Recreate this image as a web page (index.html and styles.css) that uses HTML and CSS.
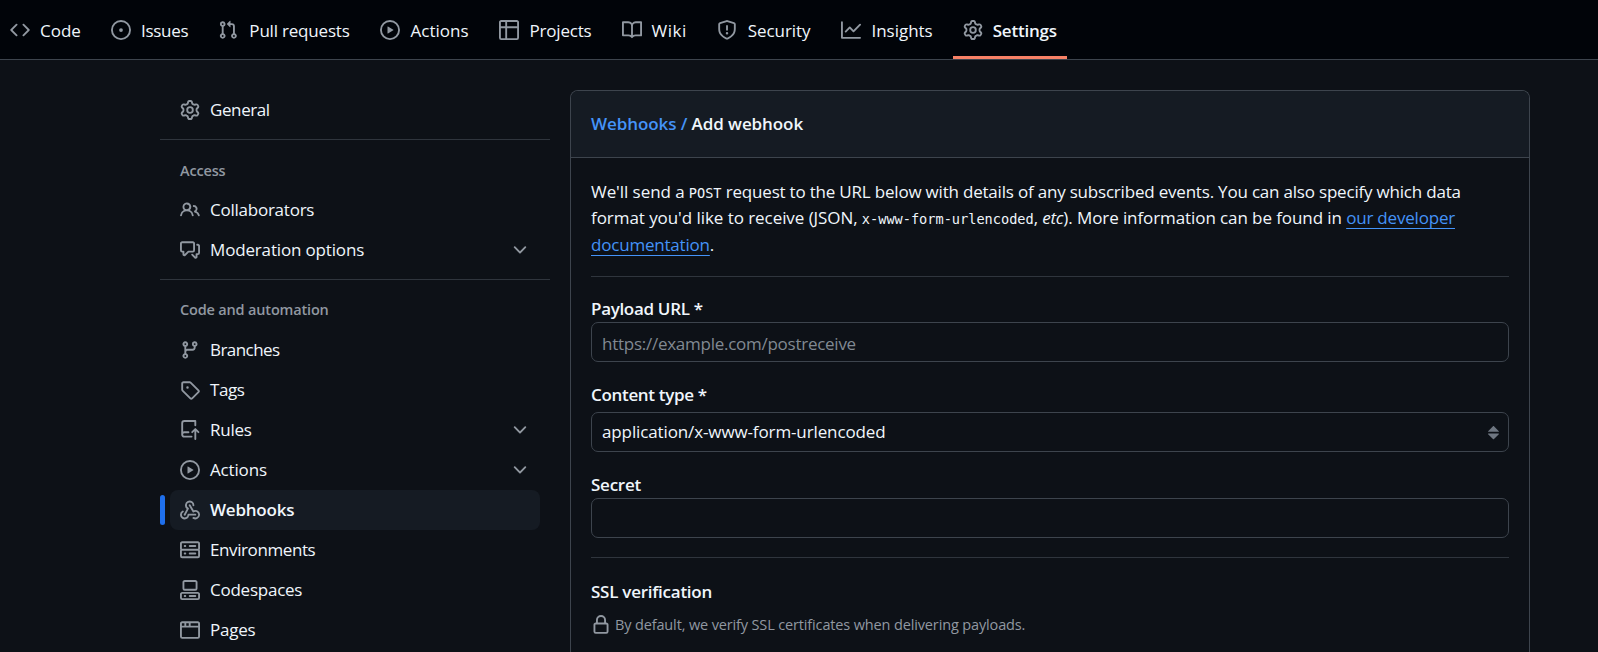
FILE: index.html
```html
<!DOCTYPE html>
<html lang="en">
<head>
<meta charset="utf-8">
<title>Add webhook</title>
<link rel="stylesheet" href="styles.css">
</head>
<body>
<svg class="sprite" aria-hidden="true">
  <symbol id="code" viewBox="0 0 16 16"><path d="m11.28 3.22 4.25 4.25a.75.75 0 0 1 0 1.06l-4.25 4.25a.749.749 0 0 1-1.275-.326.749.749 0 0 1 .215-.734L13.94 8l-3.72-3.72a.749.749 0 0 1 .326-1.275.749.749 0 0 1 .734.215Zm-6.56 0a.751.751 0 0 1 1.042.018.751.751 0 0 1 .018 1.042L2.06 8l3.72 3.72a.749.749 0 0 1-.326 1.275.749.749 0 0 1-.734-.215L.47 8.53a.75.75 0 0 1 0-1.06Z"/></symbol>
  <symbol id="issue" viewBox="0 0 16 16"><path d="M8 9.5a1.5 1.5 0 1 0 0-3 1.5 1.5 0 0 0 0 3Z"/><path d="M8 0a8 8 0 1 1 0 16A8 8 0 0 1 8 0ZM1.5 8a6.5 6.5 0 1 0 13 0 6.5 6.5 0 0 0-13 0Z"/></symbol>
  <symbol id="pull" viewBox="0 0 16 16"><path d="M1.5 3.25a2.25 2.25 0 1 1 3 2.122v5.256a2.251 2.251 0 1 1-1.5 0V5.372A2.25 2.25 0 0 1 1.5 3.25Zm5.677-.177L9.573.677A.25.25 0 0 1 10 .854V2.5h1A2.5 2.5 0 0 1 13.5 5v5.628a2.251 2.251 0 1 1-1.5 0V5a1 1 0 0 0-1-1h-1v1.646a.25.25 0 0 1-.427.177L7.177 3.427a.25.25 0 0 1 0-.354ZM3.75 2.5a.75.75 0 1 0 0 1.5.75.75 0 0 0 0-1.5Zm0 9.5a.75.75 0 1 0 0 1.5.75.75 0 0 0 0-1.5Zm8.25.75a.75.75 0 1 0 1.5 0 .75.75 0 0 0-1.5 0Z"/></symbol>
  <symbol id="play" viewBox="0 0 16 16"><path d="M8 0a8 8 0 1 1 0 16A8 8 0 0 1 8 0ZM1.5 8a6.5 6.5 0 1 0 13 0 6.5 6.5 0 0 0-13 0Zm4.879-2.773 4.264 2.559a.25.25 0 0 1 0 .428l-4.264 2.559A.25.25 0 0 1 6 10.559V5.442a.25.25 0 0 1 .379-.215Z"/></symbol>
  <symbol id="table" viewBox="0 0 16 16"><path d="M0 1.75C0 .784.784 0 1.75 0h12.5C15.216 0 16 .784 16 1.75v12.5A1.75 1.75 0 0 1 14.25 16H1.75A1.75 1.75 0 0 1 0 14.25ZM6.5 6.5v8h7.75a.25.25 0 0 0 .25-.25V6.5Zm8-1.5V1.75a.25.25 0 0 0-.25-.25H6.5V5Zm-13 1.5v7.75c0 .138.112.25.25.25H5v-8ZM5 5V1.5H1.75a.25.25 0 0 0-.25.25V5Z"/></symbol>
  <symbol id="book" viewBox="0 0 16 16"><path d="M0 1.75A.75.75 0 0 1 .75 1h4.253c1.227 0 2.317.59 3 1.501A3.743 3.743 0 0 1 11.006 1h4.245a.75.75 0 0 1 .75.75v10.5a.75.75 0 0 1-.75.75h-4.507a2.25 2.25 0 0 0-1.591.659l-.622.621a.75.75 0 0 1-1.06 0l-.622-.621A2.25 2.25 0 0 0 5.258 13H.75a.75.75 0 0 1-.75-.75Zm7.251 10.324.004-5.073-.002-2.253A2.25 2.25 0 0 0 5.003 2.5H1.5v9h3.757a3.75 3.75 0 0 1 1.994.574ZM8.755 4.75l-.004 7.322a3.752 3.752 0 0 1 1.992-.572H14.5v-9h-3.495a2.25 2.25 0 0 0-2.25 2.25Z"/></symbol>
  <symbol id="shield" viewBox="0 0 16 16"><path d="M7.467.133a1.748 1.748 0 0 1 1.066 0l5.25 1.68A1.75 1.75 0 0 1 15 3.48V7c0 1.566-.32 3.182-1.303 4.682-.983 1.498-2.585 2.813-5.032 3.855a1.697 1.697 0 0 1-1.33 0c-2.447-1.042-4.049-2.357-5.032-3.855C1.32 10.182 1 8.566 1 7V3.48a1.75 1.75 0 0 1 1.217-1.667Zm.61 1.429a.25.25 0 0 0-.153 0l-5.25 1.68a.25.25 0 0 0-.174.238V7c0 1.358.275 2.666 1.057 3.86.784 1.194 2.121 2.34 4.366 3.297a.196.196 0 0 0 .154 0c2.245-.956 3.582-2.104 4.366-3.298C13.225 9.666 13.5 8.36 13.5 7V3.48a.251.251 0 0 0-.174-.237l-5.25-1.68ZM8.75 4.75v3a.75.75 0 0 1-1.5 0v-3a.75.75 0 0 1 1.5 0ZM9 10.5a1 1 0 1 1-2 0 1 1 0 0 1 2 0Z"/></symbol>
  <symbol id="graph" viewBox="0 0 16 16"><path d="M1.5 1.75V13.5h13.75a.75.75 0 0 1 0 1.5H.75a.75.75 0 0 1-.75-.75V1.75a.75.75 0 0 1 1.5 0Zm14.28 2.53-5.25 5.25a.75.75 0 0 1-1.06 0L7 7.06 4.28 9.78a.751.751 0 0 1-1.042-.018.751.751 0 0 1-.018-1.042l3.25-3.25a.75.75 0 0 1 1.06 0L10 7.94l4.72-4.72a.751.751 0 0 1 1.042.018.751.751 0 0 1 .018 1.042Z"/></symbol>
  <symbol id="gear" viewBox="0 0 16 16"><path d="M8 0a8.2 8.2 0 0 1 .701.031C9.444.095 9.99.645 10.16 1.29l.288 1.107c.018.066.079.158.212.224.231.114.454.243.668.386.123.082.233.09.299.071l1.103-.303c.644-.176 1.392.021 1.82.63.27.385.506.792.704 1.218.315.675.111 1.422-.364 1.891l-.814.806c-.049.048-.098.147-.088.294.016.257.016.515 0 .772-.01.147.038.246.088.294l.814.806c.475.469.679 1.216.364 1.891a7.977 7.977 0 0 1-.704 1.217c-.428.61-1.176.807-1.82.63l-1.102-.302c-.067-.019-.177-.011-.3.071a5.909 5.909 0 0 1-.668.386c-.133.066-.194.158-.211.224l-.29 1.106c-.168.646-.715 1.196-1.458 1.26a8.006 8.006 0 0 1-1.402 0c-.743-.064-1.289-.614-1.458-1.26l-.289-1.106c-.018-.066-.079-.158-.212-.224a5.738 5.738 0 0 1-.668-.386c-.123-.082-.233-.09-.299-.071l-1.103.303c-.644.176-1.392-.021-1.82-.63a8.12 8.12 0 0 1-.704-1.218c-.315-.675-.111-1.422.363-1.891l.815-.806c.05-.048.098-.147.088-.294a6.214 6.214 0 0 1 0-.772c.01-.147-.038-.246-.088-.294l-.815-.806C.635 6.045.431 5.298.746 4.623a7.92 7.92 0 0 1 .704-1.217c.428-.61 1.176-.807 1.82-.63l1.102.302c.067.019.177.011.3-.071.214-.143.437-.272.668-.386.133-.066.194-.158.211-.224l.29-1.106C6.009.645 6.556.095 7.299.03 7.53.01 7.764 0 8 0Zm-.571 1.525c-.036.003-.108.036-.137.146l-.289 1.105c-.147.561-.549.967-.998 1.189-.173.086-.34.183-.5.29-.417.278-.97.423-1.529.27l-1.103-.303c-.109-.03-.175.016-.195.045-.22.312-.412.644-.573.99-.014.031-.021.11.059.19l.815.806c.411.406.562.957.53 1.456a4.709 4.709 0 0 0 0 .582c.032.499-.119 1.05-.53 1.456l-.815.806c-.081.08-.073.159-.059.19.162.346.353.677.573.989.02.03.085.076.195.046l1.102-.303c.56-.153 1.113-.008 1.53.27.161.107.328.204.501.29.447.222.85.629.997 1.189l.289 1.105c.029.109.101.143.137.146a6.6 6.6 0 0 0 1.142 0c.036-.003.108-.036.137-.146l.289-1.105c.147-.561.549-.967.998-1.189.173-.086.34-.183.5-.29.417-.278.97-.423 1.529-.27l1.103.303c.109.029.175-.016.195-.045.22-.313.411-.644.573-.99.014-.031.021-.11-.059-.19l-.815-.806c-.411-.406-.562-.957-.53-1.456a4.709 4.709 0 0 0 0-.582c-.032-.499.119-1.05.53-1.456l.815-.806c.081-.08.073-.159.059-.19a6.464 6.464 0 0 0-.573-.989c-.02-.03-.085-.076-.195-.046l-1.102.303c-.56.153-1.113.008-1.53-.27a4.44 4.44 0 0 0-.501-.29c-.447-.222-.85-.629-.997-1.189l-.289-1.105c-.029-.11-.101-.143-.137-.146a6.6 6.6 0 0 0-1.142 0ZM11 8a3 3 0 1 1-6 0 3 3 0 0 1 6 0ZM9.5 8a1.5 1.5 0 1 0-3.001.001A1.5 1.5 0 0 0 9.5 8Z"/></symbol>
  <symbol id="people" viewBox="0 0 16 16"><path d="M2 5.5a3.5 3.5 0 1 1 5.898 2.549 5.508 5.508 0 0 1 3.034 4.084.75.75 0 1 1-1.482.235 4 4 0 0 0-7.9 0 .75.75 0 0 1-1.482-.236A5.507 5.507 0 0 1 3.102 8.05 3.493 3.493 0 0 1 2 5.5ZM11 4a3.001 3.001 0 0 1 2.22 5.018 5.01 5.01 0 0 1 2.56 3.012.749.749 0 0 1-.885.954.752.752 0 0 1-.549-.514 3.507 3.507 0 0 0-2.522-2.372.75.75 0 0 1-.574-.73v-.352a.75.75 0 0 1 .416-.672A1.5 1.5 0 0 0 11 5.5.75.75 0 0 1 11 4Zm-5.5-.5a2 2 0 1 0-.001 3.999A2 2 0 0 0 5.5 3.5Z"/></symbol>
  <symbol id="discussion" viewBox="0 0 16 16"><path d="M1.75 1h8.5c.966 0 1.75.784 1.75 1.75v5.5A1.75 1.75 0 0 1 10.25 10H7.061l-2.574 2.573A1.458 1.458 0 0 1 2 11.543V10h-.25A1.75 1.75 0 0 1 0 8.25v-5.5C0 1.784.784 1 1.75 1ZM1.5 2.75v5.5c0 .138.112.25.25.25h1a.75.75 0 0 1 .75.75v2.19l2.72-2.72a.749.749 0 0 1 .53-.22h3.5a.25.25 0 0 0 .25-.25v-5.5a.25.25 0 0 0-.25-.25h-8.5a.25.25 0 0 0-.25.25Zm13 2a.25.25 0 0 0-.25-.25h-.5a.75.75 0 0 1 0-1.5h.5c.966 0 1.75.784 1.75 1.75v5.5A1.75 1.75 0 0 1 14.25 12H14v1.543a1.458 1.458 0 0 1-2.487 1.03L9.22 12.28a.749.749 0 0 1 .326-1.275.749.749 0 0 1 .734.215l2.22 2.22v-2.19a.75.75 0 0 1 .75-.75h1a.25.25 0 0 0 .25-.25Z"/></symbol>
  <symbol id="branch" viewBox="0 0 16 16"><path d="M9.5 3.25a2.25 2.25 0 1 1 3 2.122V6A2.5 2.5 0 0 1 10 8.5H6a1 1 0 0 0-1 1v1.128a2.251 2.251 0 1 1-1.5 0V5.372a2.25 2.25 0 1 1 1.5 0v1.836A2.493 2.493 0 0 1 6 7h4a1 1 0 0 0 1-1v-.628A2.25 2.25 0 0 1 9.5 3.25Zm-6 0a.75.75 0 1 0 1.5 0 .75.75 0 0 0-1.5 0Zm8.25-.75a.75.75 0 1 0 0 1.5.75.75 0 0 0 0-1.5ZM4.25 12a.75.75 0 1 0 0 1.5.75.75 0 0 0 0-1.5Z"/></symbol>
  <symbol id="tag" viewBox="0 0 16 16"><path d="M1 7.775V2.75C1 1.784 1.784 1 2.75 1h5.025c.464 0 .91.184 1.238.513l6.25 6.25a1.75 1.75 0 0 1 0 2.474l-5.026 5.026a1.75 1.75 0 0 1-2.474 0l-6.25-6.25A1.752 1.752 0 0 1 1 7.775Zm1.5 0c0 .066.026.13.073.177l6.25 6.25a.25.25 0 0 0 .354 0l5.025-5.025a.25.25 0 0 0 0-.354l-6.25-6.25a.25.25 0 0 0-.177-.073H2.75a.25.25 0 0 0-.25.25ZM6 5a1 1 0 1 1 0 2 1 1 0 0 1 0-2Z"/></symbol>
  <symbol id="push" viewBox="0 0 16 16"><path d="M1 2.5A2.5 2.5 0 0 1 3.5 0h8.75a.75.75 0 0 1 .75.75v3.5a.75.75 0 0 1-1.5 0V1.5h-8a1 1 0 0 0-1 1v6.708A2.493 2.493 0 0 1 3.5 9h3.25a.75.75 0 0 1 0 1.5H3.5a1 1 0 0 0 0 2h5.75a.75.75 0 0 1 0 1.5H3.5A2.5 2.5 0 0 1 1 11.5Zm13.23 7.79-1.224-1.224v6.184a.75.75 0 0 1-1.5 0V9.066L10.28 10.29a.75.75 0 0 1-1.06-1.061l2.505-2.504a.75.75 0 0 1 1.06 0L15.29 9.23a.751.751 0 0 1-.018 1.042.751.751 0 0 1-1.042.018Z"/></symbol>
  <symbol id="webhook" viewBox="0 0 16 16"><path d="M5.5 4.25a2.25 2.25 0 0 1 4.5 0 .75.75 0 0 0 1.5 0 3.75 3.75 0 1 0-6.14 2.889l-2.272 4.258a.75.75 0 0 0 1.324.706L7 7.25a.75.75 0 0 0-.309-1.015A2.25 2.25 0 0 1 5.5 4.25Z"/><path d="M7.364 3.607a.75.75 0 0 1 1.03.257l2.608 4.349a3.75 3.75 0 1 1-.628 6.785.75.75 0 0 1 .752-1.299 2.25 2.25 0 1 0-.033-3.88.75.75 0 0 1-1.03-.256L7.107 4.636a.75.75 0 0 1 .257-1.03Z"/><path d="M2.9 8.776A.75.75 0 0 1 2.625 9.8 2.25 2.25 0 1 0 6 11.75a.75.75 0 0 1 .75-.751h5.5a.75.75 0 0 1 0 1.5H7.425a3.751 3.751 0 1 1-5.55-3.998.75.75 0 0 1 1.024.274Z"/></symbol>
  <symbol id="server" viewBox="0 0 16 16"><path d="M1.75 1h12.5c.966 0 1.75.784 1.75 1.75v4c0 .372-.116.717-.314 1 .198.283.314.628.314 1v4a1.75 1.75 0 0 1-1.75 1.75H1.75A1.75 1.75 0 0 1 0 12.75v-4c0-.358.109-.707.314-1a1.739 1.739 0 0 1-.314-1v-4C0 1.784.784 1 1.75 1ZM1.5 2.75v4c0 .138.112.25.25.25h12.5a.25.25 0 0 0 .25-.25v-4a.25.25 0 0 0-.25-.25H1.75a.25.25 0 0 0-.25.25Zm.25 5.75a.25.25 0 0 0-.25.25v4c0 .138.112.25.25.25h12.5a.25.25 0 0 0 .25-.25v-4a.25.25 0 0 0-.25-.25ZM7 4.75A.75.75 0 0 1 7.75 4h4.5a.75.75 0 0 1 0 1.5h-4.5A.75.75 0 0 1 7 4.75ZM7.75 10h4.5a.75.75 0 0 1 0 1.5h-4.5a.75.75 0 0 1 0-1.5ZM3 4.75A.75.75 0 0 1 3.75 4h.5a.75.75 0 0 1 0 1.5h-.5A.75.75 0 0 1 3 4.75ZM3.75 10h.5a.75.75 0 0 1 0 1.5h-.5a.75.75 0 0 1 0-1.5Z"/></symbol>
  <symbol id="codespaces" viewBox="0 0 16 16"><path d="M0 11.25c0-.966.784-1.75 1.75-1.75h12.5c.966 0 1.75.784 1.75 1.75v3A1.75 1.75 0 0 1 14.25 16H1.75A1.75 1.75 0 0 1 0 14.25Zm2-9.5C2 .784 2.784 0 3.75 0h8.5C13.216 0 14 .784 14 1.75v5a1.75 1.75 0 0 1-1.75 1.75h-8.5A1.75 1.75 0 0 1 2 6.75Zm1.75-.25a.25.25 0 0 0-.25.25v5c0 .138.112.25.25.25h8.5a.25.25 0 0 0 .25-.25v-5a.25.25 0 0 0-.25-.25Zm-2 9.5a.25.25 0 0 0-.25.25v3c0 .138.112.25.25.25h12.5a.25.25 0 0 0 .25-.25v-3a.25.25 0 0 0-.25-.25Z"/><path d="M7 12.75a.75.75 0 0 1 .75-.75h4.5a.75.75 0 0 1 0 1.5h-4.5a.75.75 0 0 1-.75-.75Zm-4 0a.75.75 0 0 1 .75-.75h.5a.75.75 0 0 1 0 1.5h-.5a.75.75 0 0 1-.75-.75Z"/></symbol>
  <symbol id="browser" viewBox="0 0 16 16"><path d="M0 2.75C0 1.784.784 1 1.75 1h12.5c.966 0 1.75.784 1.75 1.75v10.5A1.75 1.75 0 0 1 14.25 15H1.75A1.75 1.75 0 0 1 0 13.25ZM14.5 6h-13v7.25c0 .138.112.25.25.25h12.5a.25.25 0 0 0 .25-.25Zm-6-3.5v2h6V2.75a.25.25 0 0 0-.25-.25ZM5 2.5v2h2v-2Zm-3.25 0a.25.25 0 0 0-.25.25V4.5h2v-2Z"/></symbol>
  <symbol id="lock" viewBox="0 0 16 16"><path d="M4 4a4 4 0 0 1 8 0v2h.25c.966 0 1.75.784 1.75 1.75v5.5A1.75 1.75 0 0 1 12.25 15h-8.5A1.75 1.75 0 0 1 2 13.25v-5.5C2 6.784 2.784 6 3.75 6H4Zm8.25 3.5h-8.5a.25.25 0 0 0-.25.25v5.5c0 .138.112.25.25.25h8.5a.25.25 0 0 0 .25-.25v-5.5a.25.25 0 0 0-.25-.25ZM10.5 6V4a2.5 2.5 0 1 0-5 0v2Z"/></symbol>
  <symbol id="chevron" viewBox="0 0 16 16"><path d="M12.78 5.22a.749.749 0 0 1 0 1.06l-4.25 4.25a.749.749 0 0 1-1.06 0L3.22 6.28a.749.749 0 1 1 1.06-1.06L8 8.939l3.72-3.719a.749.749 0 0 1 1.06 0Z"/></symbol>
  <symbol id="updown" viewBox="0 0 16 16"><path d="m4.074 9.427 3.396 3.396a.25.25 0 0 0 .354 0l3.396-3.396A.25.25 0 0 0 11.043 9H4.251a.25.25 0 0 0-.177.427ZM4.074 7.47 7.47 4.073a.25.25 0 0 1 .354 0L11.22 7.47a.25.25 0 0 1-.177.426H4.251a.25.25 0 0 1-.177-.426Z"/></symbol>
</svg>

<header class="topbar">
  <nav class="tabs">
    <a class="tab tab-code"><svg class="icon"><use href="#code"/></svg><span>Code</span></a>
    <a class="tab tab-issues"><svg class="icon"><use href="#issue"/></svg><span>Issues</span></a>
    <a class="tab tab-pulls"><svg class="icon"><use href="#pull"/></svg><span>Pull requests</span></a>
    <a class="tab tab-actions"><svg class="icon"><use href="#play"/></svg><span>Actions</span></a>
    <a class="tab tab-projects"><svg class="icon"><use href="#table"/></svg><span>Projects</span></a>
    <a class="tab tab-wiki"><svg class="icon"><use href="#book"/></svg><span>Wiki</span></a>
    <a class="tab tab-security"><svg class="icon"><use href="#shield"/></svg><span>Security</span></a>
    <a class="tab tab-insights"><svg class="icon"><use href="#graph"/></svg><span>Insights</span></a>
    <a class="tab tab-settings active"><svg class="icon"><use href="#gear"/></svg><span>Settings</span></a>
  </nav>
</header>

<main class="layout">
  <aside class="sidebar">
    <a class="item tight"><svg class="icon"><use href="#gear"/></svg><span>General</span></a>
    <hr class="side-rule rule-general">
    <h3 class="group">Access</h3>
    <a class="item"><svg class="icon"><use href="#people"/></svg><span>Collaborators</span></a>
    <a class="item loose"><svg class="icon"><use href="#discussion"/></svg><span>Moderation options</span><svg class="icon chevron"><use href="#chevron"/></svg></a>
    <hr class="side-rule rule-access">
    <h3 class="group group-code">Code and automation</h3>
    <a class="item tighter"><svg class="icon"><use href="#branch"/></svg><span>Branches</span></a>
    <a class="item tight"><svg class="icon"><use href="#tag"/></svg><span>Tags</span></a>
    <a class="item"><svg class="icon"><use href="#push"/></svg><span>Rules</span><svg class="icon chevron"><use href="#chevron"/></svg></a>
    <a class="item loose"><svg class="icon"><use href="#play"/></svg><span>Actions</span><svg class="icon chevron"><use href="#chevron"/></svg></a>
    <a class="item current"><svg class="icon"><use href="#webhook"/></svg><span>Webhooks</span></a>
    <a class="item tight"><svg class="icon"><use href="#server"/></svg><span>Environments</span></a>
    <a class="item"><svg class="icon"><use href="#codespaces"/></svg><span>Codespaces</span></a>
    <a class="item"><svg class="icon"><use href="#browser"/></svg><span>Pages</span></a>
  </aside>

  <section class="panel">
    <h2 class="panel-head"><a class="crumb">Webhooks /</a> Add webhook</h2>
    <div class="panel-body">
      <p class="intro"><span class="lead">We'll send a</span> <code class="post">POST</code> request to the URL below with details of any subscribed events. You can also specify which data<br><span class="format">format you'd like to receive (JSON,</span> <code class="mime">x-www-form-urlencoded</code>, <em>etc</em><span class="more">). More information can be found in </span><a class="link">our developer<br>documentation</a>.</p>
      <hr class="rule">
      <label class="label label-url">Payload URL *</label>
      <input class="field" type="text" placeholder="https://example.com/postreceive">
      <label class="label label-type">Content type *</label>
      <div class="field select"><span>application/x-www-form-urlencoded</span><svg class="icon arrows"><use href="#updown"/></svg></div>
      <label class="label label-secret">Secret</label>
      <input class="field" type="text">
      <hr class="rule rule-ssl">
      <h4 class="ssl-title">SSL verification</h4>
      <p class="ssl-note"><svg class="icon"><use href="#lock"/></svg><span>By default, we verify SSL certificates when delivering payloads.</span></p>
    </div>
  </section>
</main>
</body>
</html>
```

FILE: styles.css
```css
* { box-sizing: border-box; }

body {
  margin: 0;
  height: 652px;
  overflow: hidden;
  background: #0d1117;
  color: #f0f6fc;
  font: 17px/26px "Open Sans", "Noto Sans", sans-serif;
}

.sprite { display: none; }

.icon {
  flex: none;
  width: 20px;
  height: 20px;
  fill: #9198a1;
}

/* Repository tabs */
.topbar {
  height: 60px;
  background: #010409;
  border-bottom: 1px solid #3d444d;
}

.tabs {
  display: flex;
  gap: 10px;
  height: 59px;
}

.tab {
  display: flex;
  align-items: center;
  gap: 10px;
  padding: 4px 10px 0;
  border-bottom: 3px solid transparent;
  white-space: nowrap;
}

.tab span { padding-top: 1px; }

.tab.active {
  border-bottom-color: #f78166;
  font-weight: 600;
}

.tab-issues { letter-spacing: -.26px; }
.tab-pulls { gap: 11px; letter-spacing: -.2px; }
.tab-actions { gap: 11px; letter-spacing: 0; }
.tab-projects { gap: 11px; letter-spacing: -.2px; }
.tab-wiki { letter-spacing: .5px; }
.tab-security { gap: 11px; letter-spacing: -.06px; }
.tab-insights { gap: 11px; letter-spacing: -.03px; }
.tab-settings { letter-spacing: -.2px; }

/* Page columns */
.layout {
  display: grid;
  grid-template-columns: 390px 960px;
  column-gap: 20px;
  align-items: start;
  height: 592px;
  overflow: hidden;
  padding: 30px 0 0 160px;
}

/* Settings navigation */
.item {
  position: relative;
  display: flex;
  align-items: center;
  gap: 10px;
  height: 40px;
  margin: 0 10px;
  padding: 0 10px;
  border-radius: 8px;
  letter-spacing: -.24px;
}

.item.loose { letter-spacing: -.16px; }
.item.tight { letter-spacing: -.4px; }
.item.tighter { letter-spacing: -.55px; }

.item.current {
  background: #151b23;
  font-weight: 600;
  letter-spacing: -.22px;
}

.item.current::before {
  content: "";
  position: absolute;
  left: -10px;
  top: 5px;
  width: 5px;
  height: 30px;
  border-radius: 3px;
  background: #1f6feb;
}

.chevron { margin-left: auto; }

.side-rule {
  height: 1px;
  margin: 0;
  border: 0;
  background: #2f353d;
}

.rule-general { margin: 9px 0 20px; }
.rule-access { margin: 9px 0 19px; }

.group {
  height: 30px;
  margin: 0;
  padding-left: 20px;
  color: #9198a1;
  font-size: 14.5px;
  font-weight: 600;
  line-height: 22px;
  letter-spacing: -.17px;
}

.group-code { height: 31px; }

/* Webhook form */
.panel {
  height: 562px;
  border: 1px solid #3d444d;
  border-bottom: 0;
  border-radius: 8px 8px 0 0;
}

.panel-head {
  height: 67px;
  margin: 0;
  padding: 20px;
  background: #151b23;
  border-bottom: 1px solid #3d444d;
  border-radius: 7px 7px 0 0;
  font-size: 17px;
  font-weight: 600;
  line-height: 26px;
  letter-spacing: -.08px;
}

.crumb { color: #4493f8; }

.panel-body { padding: 21px 20px 0; }

.intro {
  height: 79px;
  margin: 0;
  line-height: 26.25px;
  letter-spacing: -.2px;
  white-space: nowrap;
}

.lead, .format { letter-spacing: -.06px; }
.more { letter-spacing: -.09px; }

code {
  font-family: "DejaVu Sans Mono", "Liberation Mono", monospace;
  font-size: 13.6px;
  line-height: 1;
  letter-spacing: 0;
}

.link {
  color: #4493f8;
  text-decoration: underline;
  text-decoration-thickness: 1px;
  text-underline-offset: 4px;
}

.rule {
  height: 1px;
  margin: 18px 0 19px;
  border: 0;
  background: #2f353d;
}

.label {
  display: block;
  height: 26px;
  font-weight: 600;
  letter-spacing: -.32px;
}

.field {
  display: block;
  width: 100%;
  height: 40px;
  padding: 3px 10px 0;
  background: #0d1117;
  color: #f0f6fc;
  border: 1px solid #3d444d;
  border-radius: 7px;
  outline: 0;
  font: inherit;
  letter-spacing: -.26px;
}

.field::placeholder { color: #818992; opacity: 1; }

.label-type { height: 30px; margin-top: 20px; }
.label-secret { margin-top: 20px; letter-spacing: -.24px; }

.select {
  display: flex;
  align-items: center;
  justify-content: space-between;
  padding: 0 2px 0 10px;
  letter-spacing: -.12px;
}

.arrows {
  width: 24px;
  height: 24px;
  fill: #6e7681;
}

.rule-ssl { margin: 19px 0 21px; }

.ssl-title {
  margin: 0;
  font-size: 17px;
  font-weight: 600;
  line-height: 26px;
  letter-spacing: -.26px;
}

.ssl-note {
  display: flex;
  align-items: center;
  gap: 4px;
  margin: 9px 0 0;
  color: #9198a1;
  font-size: 14.5px;
  line-height: 22px;
  letter-spacing: -.14px;
}
```
